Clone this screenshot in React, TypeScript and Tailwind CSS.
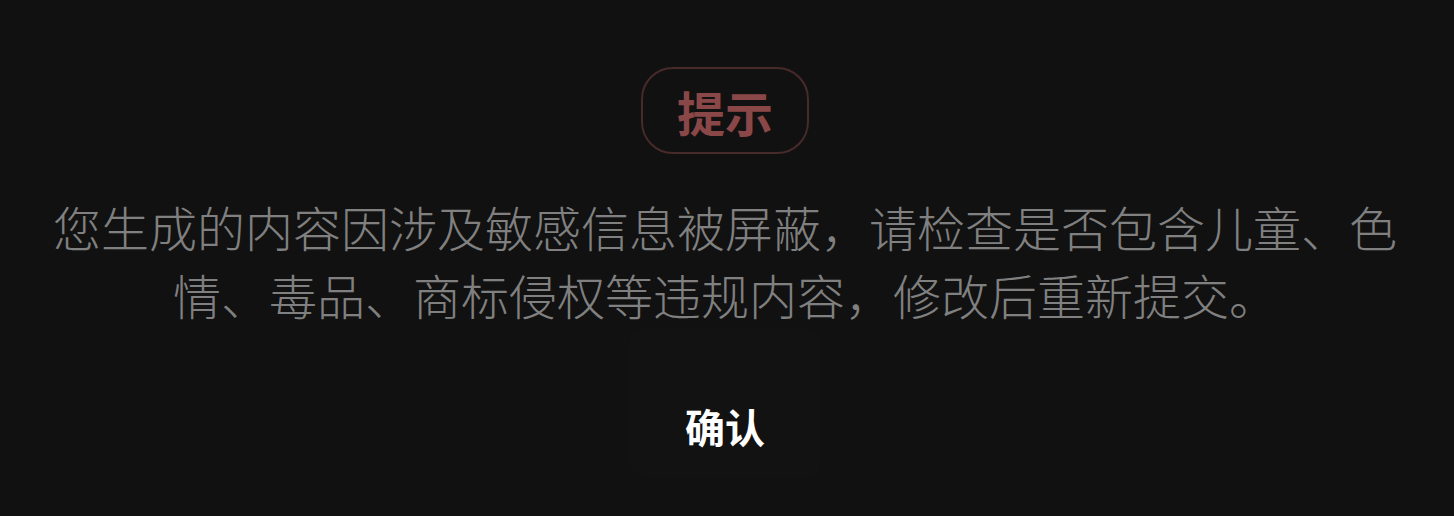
import React from 'react';

const FONT = '"Noto Sans CJK SC", "Noto Sans", sans-serif';

const App: React.FC = () => {
  return (
    <div className="w-full h-[516px] bg-[#111111] flex flex-col items-center pt-[67px] pr-[4px]" style={{ fontFamily: FONT }}>
      {/* Title pill */}
      <div className="h-[87px] px-[34px] flex items-center rounded-[32px] border-2 border-[#472a2a]">
        <span className="text-[48px] leading-none font-bold text-[#8a4747]">提示</span>
      </div>

      {/* Message */}
      <p className="mt-[38px] w-[1350px] text-center text-[48px] leading-[68px] font-light text-[#808080]">
        您生成的内容因涉及敏感信息被屏蔽，请检查是否包含儿童、色情、毒品、商标侵权等违规内容，修改后重新提交。
      </p>

      {/* Confirm button */}
      <button className="w-[192px] h-[150px] pt-[69px] pb-[23px] rounded-2xl bg-[#121212] text-white text-[40px] leading-[58px] font-bold">
        确认
      </button>
    </div>
  );
};

export default App;
